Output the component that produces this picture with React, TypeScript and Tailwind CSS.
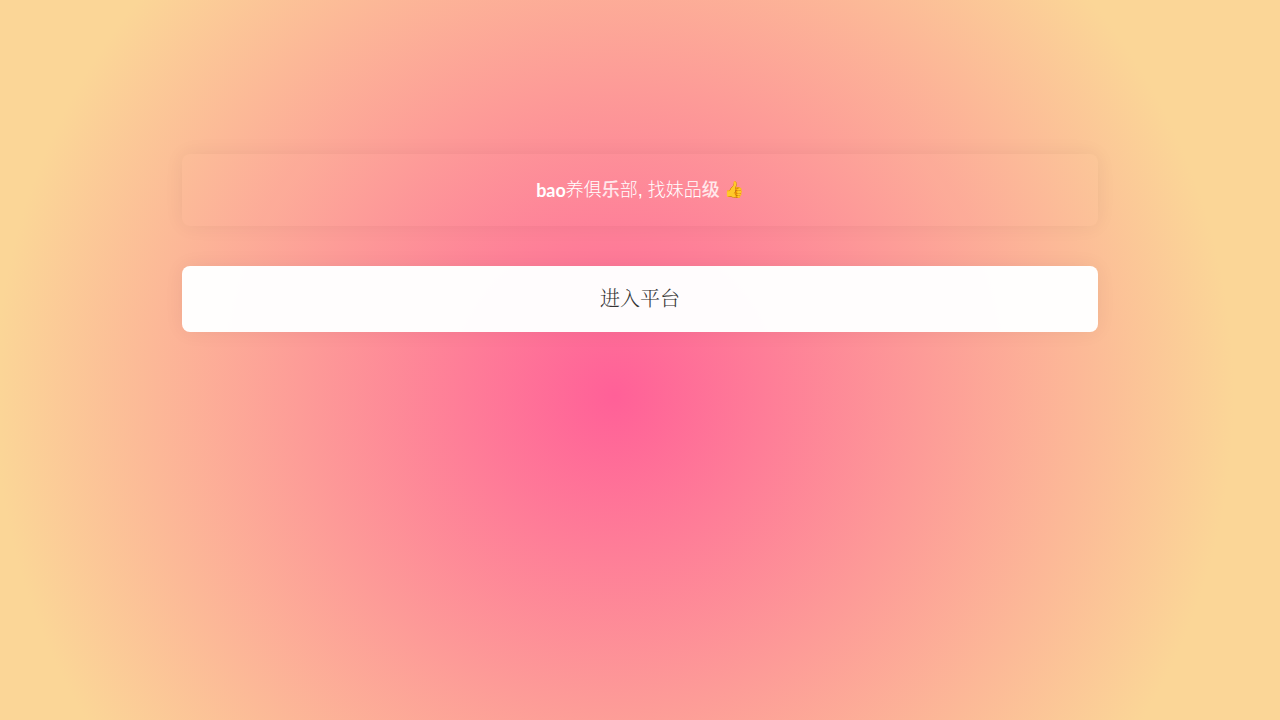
import React from 'react';

const TITLE = [
  { text: 'bao', style: "font-['Lato',sans-serif] font-bold" },
  { text: '养俱', style: 'font-light' },
  { text: '乐', style: 'font-medium text-white/80' },
  { text: '部, 找妹品', style: 'font-light' },
  { text: '级', style: 'font-medium text-white/80' },
];

const App: React.FC = () => {
  return (
    <div className="min-h-screen bg-[radial-gradient(circle_farthest-corner_at_48%_55%,#ff6098_0%,#fbd697_80%)] px-4 pt-[154px] pb-10">
      <main className="mx-auto flex w-full max-w-[916px] flex-col gap-10">
        {/* Title card */}
        <header className="rounded-lg bg-white/1 px-6 py-[22px] shadow-[0_0_20px_rgba(0,0,0,0.06)]">
          <h1 className="flex items-center justify-center font-['Liberation_Sans','Noto_Sans_CJK_SC',sans-serif] text-[18px] leading-7 text-white">
            {TITLE.map((part) => (
              <span key={part.text} className={part.style}>
                {part.text}
              </span>
            ))}
            <span className="ml-1 text-[16px]">👍</span>
          </h1>
        </header>

        {/* Entry button */}
        <button
          type="button"
          className="w-full cursor-pointer rounded-lg bg-white/98 px-6 pt-[17px] pb-[19px] text-center font-['Noto_Serif_CJK_SC','Noto_Sans_CJK_SC',serif] text-[20px] leading-[30px] font-light text-[#333] shadow-[0_0_20px_rgba(0,0,0,0.06)]"
        >
          进入平台
        </button>
      </main>
    </div>
  );
};

export default App;
